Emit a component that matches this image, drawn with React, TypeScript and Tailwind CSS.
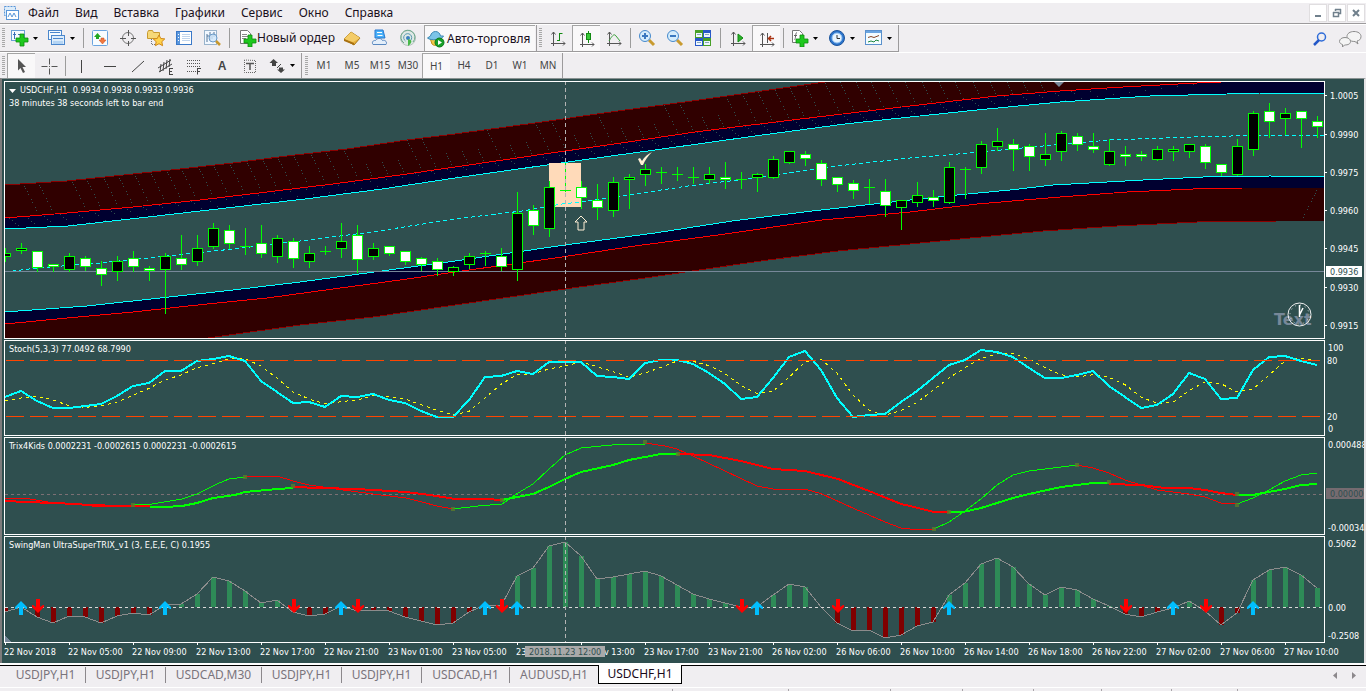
import React from 'react';

type Kind = 'up' | 'down' | 'doji';
type Candle = [Kind, number, number, number, number];

const STEP = 16;
const FIRST_X = 5;
const barX = (i: number) => FIRST_X + i * STEP;

// kind, high, body top, body bottom, low
const candles: Candle[] = [
  ['up', 248, 253, 257, 261], ['up', 243, 248, 251, 253], ['down', 251, 251, 268, 271], ['down', 264, 264, 267, 271],
  ['up', 253, 256, 270, 271], ['down', 256, 258, 267, 270], ['down', 261, 268, 275, 285], ['up', 256, 261, 272, 280],
  ['down', 251, 258, 267, 271], ['down', 266, 268, 271, 280], ['up', 253, 256, 270, 313], ['down', 235, 258, 265, 269],
  ['up', 235, 248, 262, 265], ['up', 223, 228, 247, 248], ['down', 225, 230, 244, 248], ['doji', 228, 246, 246, 254],
  ['down', 225, 243, 254, 257], ['up', 235, 238, 257, 262], ['down', 238, 241, 259, 267], ['up', 246, 253, 262, 267],
  ['doji', 246, 251, 251, 254], ['up', 223, 241, 249, 257], ['down', 225, 235, 260, 272], ['up', 243, 248, 257, 259],
  ['down', 246, 246, 254, 255], ['down', 251, 251, 262, 264], ['down', 257, 258, 265, 270], ['down', 258, 261, 270, 275],
  ['up', 266, 267, 272, 275], ['up', 253, 256, 265, 268], ['doji', 251, 253, 253, 265], ['down', 248, 256, 267, 270],
  ['up', 192, 213, 270, 280], ['down', 205, 210, 226, 234], ['up', 181, 187, 229, 236], ['doji', 163, 190, 190, 191],
  ['down', 181, 187, 198, 208], ['down', 184, 200, 208, 219], ['up', 177, 182, 211, 216], ['up', 174, 177, 180, 208],
  ['up', 164, 169, 175, 185], ['doji', 167, 172, 172, 183], ['doji', 167, 174, 174, 180], ['doji', 167, 177, 177, 183],
  ['up', 167, 174, 180, 183], ['down', 162, 177, 180, 188], ['doji', 172, 179, 179, 188], ['up', 173, 174, 178, 191],
  ['up', 156, 159, 178, 178], ['up', 151, 151, 163, 163], ['down', 151, 154, 159, 165], ['down', 160, 163, 180, 185],
  ['down', 177, 177, 185, 191], ['down', 180, 183, 191, 198], ['doji', 179, 187, 187, 203], ['down', 179, 191, 206, 216],
  ['up', 200, 200, 208, 229], ['up', 182, 195, 203, 206], ['down', 190, 197, 201, 206], ['up', 162, 167, 203, 203],
  ['doji', 167, 169, 169, 198], ['up', 141, 144, 168, 173], ['up', 128, 141, 147, 150], ['down', 139, 144, 150, 170],
  ['down', 144, 146, 157, 170], ['up', 133, 154, 160, 165], ['up', 131, 133, 152, 160], ['down', 133, 136, 145, 150],
  ['down', 133, 146, 150, 152], ['up', 139, 151, 165, 165], ['down', 146, 154, 157, 165], ['down', 151, 154, 157, 160],
  ['up', 146, 149, 160, 160], ['up', 146, 149, 152, 160], ['up', 144, 144, 152, 157], ['down', 144, 146, 163, 168],
  ['down', 164, 164, 173, 175], ['up', 139, 146, 175, 175], ['up', 111, 113, 150, 155], ['down', 103, 111, 122, 137],
  ['up', 108, 113, 119, 134], ['down', 111, 111, 119, 147], ['down', 116, 121, 127, 137],
];

// Channel envelopes, left to right
const upperOuter = '5,185 67,181 133,174 180,169 233,163 287,156 347,149 407,140 455,134 535,123 618,111 685,102 748,93 825,82 900,70 1324,40';
const upperRed = '5,218 67,213 133,207 200,200 267,192 333,184 400,175 455,167 565,151 628,142 695,132 792,120 910,106 997,96 1060,91 1123,87 1197,83 1245,81 1324,79';
const upperCyan = '5,229 68,226 148,217 235,207 305,199 382,189 455,178 582,160 655,150 755,136 845,124 910,117 977,110 1060,102 1150,96 1227,94 1260,93 1293,93 1324,94';
const middle = '5,272 37,268 100,263 167,256 233,249 308,240 372,232 455,219 522,211 562,204 588,201 628,195 688,186 755,178 828,167 910,158 970,153 1053,145 1110,140 1193,137 1270,135 1324,135';
const lowerCyan = '5,312 87,306 160,298 233,290 300,282 367,273 455,261 565,245 655,233 732,221 812,211 910,200 957,195 1010,190 1053,185 1143,180 1203,177 1270,176 1324,177';
const lowerRed = '5,324 67,318 133,312 207,304 267,298 333,289 400,280 455,272 555,258 635,246 718,235 822,220 910,212 977,204 1060,197 1127,192 1193,189 1243,188 1324,188';
const lowerOuter = '5,366 215,337 300,325 373,317 455,305 565,289 645,278 692,271 768,260 838,251 910,244 960,239 1043,231 1117,226 1197,222 1277,221 1324,221';

const band = (a: string, b: string) => `${a} ${b.split(' ').reverse().join(' ')}`;

const outerHatch: [number, number][] = [
  [23, 183], [38, 182], [71, 179], [86, 178], [103, 176], [118, 175], [134, 173], [150, 171], [166, 169], [181, 168],
  [198, 166], [213, 164], [229, 162], [246, 160], [262, 158], [277, 156], [293, 154], [310, 152], [325, 150], [343, 148],
  [366, 164], [382, 162], [398, 160], [407, 140], [422, 139], [446, 153], [462, 151], [478, 149], [487, 130], [510, 145],
  [526, 142], [535, 122], [551, 120], [574, 135], [590, 133], [599, 117], [621, 128], [638, 126], [654, 124], [664, 105],
  [679, 102], [702, 117], [718, 115], [726, 96], [742, 93], [758, 92], [775, 90], [790, 88], [806, 86], [825, 83],
  [840, 82], [856, 82], [871, 82], [888, 82], [905, 82], [922, 82], [939, 82], [955, 82], [973, 82], [990, 82],
  [1007, 82], [1023, 82], [1040, 82],
];

const stoch = [
  397, 391, 401, 408, 408, 406, 404, 396, 386, 383, 371, 371, 361, 359, 356, 361, 381, 392, 403, 402, 407, 396, 397, 394,
  400, 403, 411, 417, 417, 400, 377, 376, 371, 374, 362, 362, 362, 376, 377, 379, 363, 360, 360, 364, 373, 384, 399, 397,
  378, 357, 351, 370, 398, 417, 415, 414, 402, 391, 378, 365, 360, 350, 352, 357, 368, 378, 378, 375, 371, 386, 397, 408,
  405, 394, 373, 379, 399, 398, 370, 357, 356, 361, 365,
];

const signal = stoch.map((v, i) => {
  if (i === 0) return 401;
  if (i === 1) return 398;
  return (v + stoch[i - 1] + stoch[i - 2]) / 3;
});

const thickTrix: [string, string][] = [
  ['#ff0000', '5,501 27,502 77,504 97,506 150,506'],
  ['#00ff00', '150,507 165,507 182,506 197,503 213,498 235,495 245,492 277,489 293,488'],
  ['#ff0000', '293,487 320,488 357,489 390,491 406,492 430,495 455,499 486,499 502,500'],
  ['#00ff00', '502,500 517,497 533,494 549,487 565,479 581,472 613,465 629,460 661,454 678,454'],
  ['#ff0000', '678,454 709,455 741,461 773,469 805,471 838,479 869,491 901,504 910,506 934,512 949,512'],
  ['#00ff00', '949,512 963,512 981,508 1013,498 1029,494 1061,487 1093,483 1109,483'],
  ['#ff0000', '1109,484 1141,485 1165,488 1189,488 1205,490 1221,493 1237,495'],
  ['#00ff00', '1237,495 1253,495 1263,493 1285,489 1301,485 1317,484'],
];

const thinTrix: [string, string][] = [
  ['#ff0000', '5,499 17,498 30,499 48,502 77,504 133,506'],
  ['#00ff00', '133,505 152,504 182,499 197,494 217,484 229,479 245,477'],
  ['#ff0000', '245,476 277,476 293,481 309,485 323,487 343,490 373,494 406,498 422,502 437,506 453,509'],
  ['#00ff00', '453,509 478,506 502,504 518,493 533,484 549,469 565,455 581,448 622,444 645,444'],
  ['#ff0000', '645,443 665,446 677,449 693,456 725,471 757,486 773,489 805,489 822,494 855,509 869,515 885,522 901,528 910,529 934,529'],
  ['#00ff00', '934,529 949,522 965,511 981,499 997,485 1013,475 1029,471 1045,469 1061,467 1077,465'],
  ['#ff0000', '1077,465 1093,468 1109,473 1125,480 1141,485 1157,490 1189,494 1205,497 1221,503 1237,504'],
  ['#00ff00', '1237,504 1253,498 1269,490 1285,481 1301,475 1317,473'],
];

const trixDots: [number, number][] = [
  [133, 505], [245, 477], [293, 486], [453, 509], [502, 500], [645, 442], [678, 454], [934, 529], [949, 512], [1077, 465],
  [1109, 482], [1237, 494], [1237, 505],
];

const swing = [
  612, 607, 617, 623, 616, 617, 623, 616, 613, 615, 605, 604, 594, 577, 581, 591, 603, 600, 612, 616, 614, 606, 611, 610,
  611, 617, 621, 625, 623, 612, 605, 606, 576, 568, 546, 542, 556, 579, 577, 574, 571, 576, 585, 594, 599, 603, 607, 607,
  595, 584, 587, 607, 623, 631, 630, 638, 635, 626, 622, 595, 583, 564, 558, 567, 584, 595, 587, 590, 599, 606, 614, 617,
  612, 608, 601, 611, 625, 613, 580, 570, 567, 575, 588,
];
const buyBars = [1, 10, 21, 30, 32, 47, 59, 73, 78];
const sellBars = [2, 18, 22, 31, 46, 52, 70, 75];

const timeLabels = [
  '22 Nov 2018', '22 Nov 05:00', '22 Nov 09:00', '22 Nov 13:00', '22 Nov 17:00', '22 Nov 21:00', '23 Nov 01:00',
  '23 Nov 05:00', '23 Nov 09:00', '23 Nov 13:00', '23 Nov 17:00', '23 Nov 21:00', '26 Nov 02:00', '26 Nov 06:00',
  '26 Nov 10:00', '26 Nov 14:00', '26 Nov 18:00', '26 Nov 22:00', '27 Nov 02:00', '27 Nov 06:00', '27 Nov 10:00',
];

const line = (values: number[]) => values.map((v, i) => `${barX(i)},${v}`).join(' ');

/* ---------- chart ---------- */

const Crosshair = ({ y, h }: { y: number; h: number }) => (
  <path d={`M565.5 ${y}V${y + h}`} stroke="#b4b4b4" strokeDasharray="4 3" />
);

interface PanelProps {
  top: number;
  height: number;
  className: string;
  title: React.ReactNode;
  axis: React.ReactNode;
  children: React.ReactNode;
}

const Panel = ({ top, height, className, title, axis, children }: PanelProps) => (
  <section className={`flex ${className}`}>
    <div className="relative flex-1 min-w-0 border border-white">
      <svg
        className="block w-full h-full"
        viewBox={`5 ${top + 1} 1319 ${height - 2}`}
        preserveAspectRatio="none"
        fill="none"
        shapeRendering="crispEdges"
      >
        {children}
        <Crosshair y={top} h={height} />
      </svg>
      <div className="absolute left-1 top-[2px] leading-[13px] whitespace-pre">{title}</div>
    </div>
    <svg className="block w-[39px] h-full" viewBox={`1325 ${top} 39 ${height}`} fill="#ffffff">
      {axis}
    </svg>
  </section>
);

const PriceAxis = () => (
  <>
    {([
      [95, '1.0005'], [134, '0.9990'], [172, '0.9975'], [210, '0.9960'], [248, '0.9945'], [287, '0.9930'], [325, '0.9915'],
    ] as [number, string][]).map(([y, label]) => (
      <g key={label}>
        <rect x="1325" y={y} width="2" height="1" />
        <text x="1330" y={y + 4}>{label}</text>
      </g>
    ))}
    <rect x="1326" y="266" width="36" height="11" />
    <text x="1330" y="275" fill="#2f4f4f">0.9936</text>
  </>
);

const CandleShape = ({ candle, x }: { candle: Candle; x: number }) => {
  const [kind, high, top, bottom, low] = candle;
  return (
    <g stroke="#00ff00">
      <path d={`M${x + 0.5} ${high}V${low + 1}`} />
      {kind === 'doji' ? (
        <path d={`M${x - 5} ${top + 0.5}H${x + 6}`} />
      ) : (
        <rect
          x={x - 4.5}
          y={top + 0.5}
          width="10"
          height={Math.max(bottom - top - 1, 2)}
          fill={kind === 'up' ? '#000000' : '#ffffff'}
        />
      )}
    </g>
  );
};

const PriceChart = () => (
  <>
    <defs>
      <clipPath id="outer-band">
        <polygon points={band(upperOuter, upperRed)} />
      </clipPath>
      <clipPath id="inner-band">
        <polygon points={band(upperRed, upperCyan)} />
      </clipPath>
    </defs>
    <polygon points={band(upperOuter, upperRed)} fill="#300000" />
    <polygon points={band(upperRed, upperCyan)} fill="#000030" />
    <polygon points={band(lowerCyan, lowerRed)} fill="#000030" />
    <polygon points={band(lowerRed, lowerOuter)} fill="#300000" />
    <g stroke="#2f4f4f" strokeDasharray="1 2" clipPath="url(#outer-band)">
      {outerHatch.map(([x, y]) => (
        <path key={x} d={`M${x} ${y}l22 44`} />
      ))}
    </g>
    <g stroke="#2f4f4f" strokeDasharray="1 3" clipPath="url(#inner-band)">
      {Array.from({ length: 74 }, (_, i) => (
        <path key={i} d={`M${barX(i) + 4} ${218 - i * 2}l18 14`} />
      ))}
    </g>
    <path d="M1317 190L1302 220" stroke="#2f4f4f" strokeDasharray="1 2" />
    <polyline points={upperOuter} stroke="#8b0000" />
    <polyline points={lowerOuter} stroke="#8b0000" />
    <polyline points={upperRed} stroke="#ff0000" />
    <polyline points={lowerRed} stroke="#ff0000" />
    <polyline points={upperCyan} stroke="#00ffff" />
    <polyline points={lowerCyan} stroke="#00ffff" />
    <rect x="549" y="163" width="32" height="44" fill="#ffdab9" />
    <polyline points={middle} stroke="#00ffff" strokeDasharray="4 3" />
    <path d="M5 271.5H1324" stroke="#778899" />
    {candles.map((candle, i) => (
      <CandleShape key={i} candle={candle} x={barX(i)} />
    ))}
    <g shapeRendering="auto">
      <path d="M638 159l2-1 2 3c2-4 6-7 10-9c-4 4-7 8-9 13h-2z" fill="#ffefd5" />
      <path d="M581 216l6 6h-3v8h-6v-8h-3z" stroke="#ffefd5" />
      <path d="M1054 82h10l-5 5z" fill="#778899" />
      <text x="1274" y="325" fill="#778899" className="font-['DejaVu_Sans',sans-serif] text-[16px] font-bold">Text</text>
      <circle cx="1299.5" cy="314.5" r="11.5" stroke="#f0f0f0" />
      <circle cx="1299.5" cy="314.5" r="9.5" stroke="#d0d8d8" strokeDasharray="1 4" />
      <path d="M1299.5 305V317M1299.5 315l3.5-7" stroke="#ffffff" strokeWidth="1.5" />
    </g>
  </>
);

const StochChart = () => (
  <>
    <polyline points={line(signal)} stroke="#ffff00" strokeDasharray="3 4" />
    <polyline points={line(stoch)} stroke="#00ffff" strokeWidth="2" />
    <path d="M6 360.5H1324M6 416.5H1324" stroke="#ff4500" strokeDasharray="18 6" />
  </>
);

const TrixChart = () => (
  <>
    <path d="M5 494.5H1324" stroke="#7c7074" strokeDasharray="3 3" />
    {thickTrix.map(([color, points]) => (
      <polyline key={points} points={points} stroke={color} strokeWidth="2" />
    ))}
    {thinTrix.map(([color, points]) => (
      <polyline key={points} points={points} stroke={color} />
    ))}
    {trixDots.map(([x, y]) => (
      <rect key={`${x}-${y}`} x={x - 2} y={y - 2} width="4" height="4" fill="#5a7a2a" fillOpacity="0.8" />
    ))}
  </>
);

const SwingChart = () => (
  <>
    {swing.map((y, i) => (
      <rect
        key={i}
        x={barX(i) - 2}
        y={Math.min(y, 607)}
        width="5"
        height={Math.abs(y - 607)}
        fill={y < 607 ? '#2e8b57' : '#800000'}
      />
    ))}
    <polyline points={line(swing)} stroke="#8c8c8c" />
    <path d="M5 607.5H1324" stroke="#d8d8d8" strokeDasharray="3 3" />
    <path d="M5 636l6 6h-6z" fill="#778899" />
    <g shapeRendering="auto">
      {buyBars.map(i => (
        <path key={i} d={`M${barX(i)} 601l6 6v2h-1l-3-2v8h-4v-8l-3 2h-1v-2z`} fill="#00bfff" />
      ))}
      {sellBars.map(i => (
        <path key={i} d={`M${barX(i) + 1} 613l6-6v-2h-1l-3 2v-8h-4v8l-3-2h-1v2z`} fill="#ff0000" />
      ))}
    </g>
  </>
);

const TimeAxis = () => (
  <svg className="block w-full h-5" viewBox="4 643 1360 20" preserveAspectRatio="none" fill="#ffffff">
    {timeLabels.map((label, i) => (
      <g key={label}>
        <rect x={5 + i * 64} y="643" width="1" height="2" />
        <text x={4 + i * 64} y="655">{label}</text>
      </g>
    ))}
    <rect x="525" y="646" width="80" height="11" fill="#a9a9a9" />
    <text x="529" y="655" fill="#2f4f4f">2018.11.23 12:00</text>
  </svg>
);

const ChartWindow = () => (
  <main className="flex flex-col gap-px bg-[#2f4f4f] border-l-2 border-l-[#7d7b7b] border-r-2 border-r-[#e6e4e6] border-t border-t-[#8a9292] pt-[2px] pl-[2px] text-[9px] text-white font-['DejaVu_Sans_Condensed','DejaVu_Sans',sans-serif]">
    <Panel
      top={81}
      height={258}
      className="h-[258px]"
      title={
        <>
          <h1 className="flex items-center gap-1">
            <svg width="7" height="4" viewBox="0 0 7 4" fill="#ffffff"><path d="M0 0h7L3.5 4z" /></svg>
            {'USDCHF,H1  0.9934 0.9938 0.9933 0.9936'}
          </h1>
          <p>38 minutes 38 seconds left to bar end</p>
        </>
      }
      axis={<PriceAxis />}
    >
      <PriceChart />
    </Panel>
    <Panel
      top={340}
      height={96}
      className="h-[96px]"
      title={<h2>Stoch(5,3,3) 77.0492 68.7990</h2>}
      axis={
        <>
          <text x="1328" y="351">100</text>
          <text x="1327" y="364">80</text>
          <text x="1327" y="420">20</text>
          <text x="1328" y="432">0</text>
        </>
      }
    >
      <StochChart />
    </Panel>
    <Panel
      top={437}
      height={98}
      className="h-[98px]"
      title={<h2>Trix4Kids 0.0002231 -0.0002615 0.0002231 -0.0002615</h2>}
      axis={
        <>
          <text x="1328" y="448">0.000488</text>
          <rect x="1326" y="488" width="38" height="11" fill="#756b70" />
          <text x="1330" y="497" fill="#2f4f4f">0.0000000</text>
          <text x="1328" y="531">-0.00034</text>
        </>
      }
    >
      <TrixChart />
    </Panel>
    <Panel
      top={536}
      height={107}
      className="h-[107px]"
      title={<h2>SwingMan UltraSuperTRIX_v1 (3, E,E,E, C) 0.1955</h2>}
      axis={
        <>
          <text x="1328" y="547">0.5062</text>
          <text x="1328" y="611">0.00</text>
          <text x="1328" y="639">-0.2508</text>
        </>
      }
    >
      <SwingChart />
    </Panel>
    <div className="-mt-px">
      <TimeAxis />
    </div>
  </main>
);

/* ---------- toolbars ---------- */

const Svg = ({ children }: { children: React.ReactNode }) => (
  <svg width="18" height="18" viewBox="0 0 18 18" fill="none" className="shrink-0">
    {children}
  </svg>
);

const Plus = ({ x, y }: { x: number; y: number }) => (
  <path d={`M${x + 4} ${y}h4v4h4v4h-4v4h-4v-4h-4v-4h4z`} fill="#1ec81e" stroke="#0c8c0c" strokeWidth="0.8" />
);

const AxisMark = () => <path d="M4.5 3V17M2.5 5.5l2-2.5 2 2.5M2 14.5H16M14 12.5l2 2-2 2" stroke="#555555" />;

const icons = {
  newChart: (
    <Svg>
      <rect x="0.5" y="1.5" width="13" height="10" fill="#f4faff" stroke="#6a9fd6" />
      <path d="M3.5 3v7M2 5.5h3M7 5.5h4" stroke="#3a70b8" />
      <Plus x={5} y={5} />
    </Svg>
  ),
  profiles: (
    <Svg>
      <rect x="0.5" y="1.5" width="13" height="9" fill="#f4faff" stroke="#4a86cc" />
      <rect x="3.5" y="6.5" width="13" height="9" fill="#dcecfb" stroke="#4a86cc" />
      <path d="M2 3.5h10M5 9.5h10" stroke="#4a86cc" />
      <path d="M5 12h10v3H5z" fill="#b4d4f4" />
    </Svg>
  ),
  market: (
    <Svg>
      <rect x="1.5" y="1.5" width="15" height="15" rx="1" fill="#f8fcff" stroke="#6aa4e0" />
      <path d="M6.5 4l3.5 4H8v2H5V8H3z" fill="#22a822" />
      <path d="M11.5 15l-3.5-4h2V9h3v2h2z" fill="#f07840" stroke="#c84a18" strokeWidth="0.5" />
    </Svg>
  ),
  target: (
    <Svg>
      <circle cx="9" cy="9" r="5.5" stroke="#777777" />
      <path d="M9.5 1v6M9.5 12v5M1 9.5h6M12 9.5h5" stroke="#555555" />
    </Svg>
  ),
  favorites: (
    <Svg>
      <path d="M.5 3.5l1-2h4l1 2h6v6h-12z" fill="#f6d878" stroke="#c89a30" />
      <path d="M4.5 10v6M5 15.5h4" stroke="#777777" strokeDasharray="1 1" />
      <path d="M12 6l1.8 3.5 4 .4-3 2.8.8 4-3.6-2-3.6 2 .8-4-3-2.8 4-.4z" fill="#ffd24a" stroke="#d08818" />
    </Svg>
  ),
  navigator: (
    <Svg>
      <rect x="1.5" y="2.5" width="15" height="13" fill="#ffffff" stroke="#3a78c8" />
      <path d="M2 3h3v12H2z" fill="#5a96dc" />
      <path d="M7 5.5h8M7 7.5h8M7 9.5h8M7 11.5h8" stroke="#c0d4ec" />
      <path d="M3.5 5v1M3.5 8v1M3.5 11v1" stroke="#ffffff" />
    </Svg>
  ),
  tester: (
    <Svg>
      <rect x="1.5" y="1.5" width="12" height="14" fill="#f2f8ff" stroke="#9ab4cc" />
      <path d="M4 13V5M4 7h2M7 11V3M9 10V5M11 8V3" stroke="#557799" />
      <circle cx="10" cy="9" r="4" fill="#cfe6fa" fillOpacity="0.8" stroke="#6a9ac8" />
      <path d="M13 12l4 4" stroke="#c8982c" strokeWidth="2.5" />
    </Svg>
  ),
  order: (
    <Svg>
      <path d="M1.5 1.5h7l3 3v10h-10z" fill="#ffffff" stroke="#777777" />
      <path d="M3 5.5h5M3 7.5h6M3 9.5h4" stroke="#888888" />
      <Plus x={5} y={6} />
    </Svg>
  ),
  gold: (
    <Svg>
      <path d="M1 10l7-7 9 6-6 7z" fill="#e8b23c" stroke="#a87818" />
      <path d="M1 10l7-7 9 6-7 4z" fill="#f4cc68" />
      <path d="M1 10v2l10 4v-2z" fill="#a87010" />
    </Svg>
  ),
  signals: (
    <Svg>
      <path d="M4 1h8l2 8H4z" fill="#48b0f8" stroke="#2878d0" />
      <path d="M6 3.5h5M6.5 6.5h5" stroke="#ffffff" />
      <path d="M2 15.5c-1.5-2 0-4.5 2.5-4 1-2.5 6-3 7 0 3-1 5 2 3.5 4z" fill="#e4eefa" stroke="#5a88c0" />
    </Svg>
  ),
  radio: (
    <Svg>
      <circle cx="9" cy="9" r="7.5" fill="#dfe9e6" stroke="#b4c4bc" />
      <path d="M5 14a7 7 0 1 1 9-1" stroke="#6ca88c" />
      <path d="M6.5 12a4 4 0 1 1 5-.5" stroke="#5a98b0" />
      <circle cx="9" cy="9" r="2" fill="#3a80c0" />
      <path d="M9 10c5 1 4 4 0 7z" fill="#48b848" />
    </Svg>
  ),
  robot: (
    <Svg>
      <path d="M3 8l2 6c2 2 5 2 7 0l2-6z" fill="#f4c848" stroke="#c09020" />
      <path d="M3.5 6c1-6 9-6 10 0l3 0c-1 4-13 5-16 2z" fill="#7cc4e8" stroke="#3c88b4" />
      <circle cx="12.5" cy="12.5" r="4.5" fill="#18a028" stroke="#0a7818" />
      <path d="M11 10l4 2.5-4 2.5z" fill="#ffffff" />
    </Svg>
  ),
  bars: (
    <Svg>
      <AxisMark />
      <path d="M10.5 4v8M8 11.5h2.5M10.5 4.5h3" stroke="#128a12" />
    </Svg>
  ),
  candlesIcon: (
    <Svg>
      <AxisMark />
      <path d="M10.5 1v12" stroke="#128a12" />
      <rect x="8.5" y="3.5" width="4" height="6" fill="#38c838" stroke="#128a12" />
    </Svg>
  ),
  lineChart: (
    <Svg>
      <AxisMark />
      <path d="M4 12c3-5 5-8 7-5l4 5" stroke="#38a038" />
    </Svg>
  ),
  zoomIn: (
    <Svg>
      <path d="M11 11l5 5" stroke="#c89a30" strokeWidth="3" />
      <circle cx="7" cy="7" r="5.5" fill="#d4ecfc" stroke="#4488cc" />
      <path d="M4 7h6M7 4v6" stroke="#3a78c0" strokeWidth="2" />
    </Svg>
  ),
  zoomOut: (
    <Svg>
      <path d="M11 11l5 5" stroke="#c89a30" strokeWidth="3" />
      <circle cx="7" cy="7" r="5.5" fill="#d4ecfc" stroke="#4488cc" />
      <path d="M4 7h6" stroke="#3a78c0" strokeWidth="2" />
    </Svg>
  ),
  tile: (
    <Svg>
      <path d="M1 1h8v8H1zM9 9h8v8H9z" fill="#48a028" />
      <path d="M9 1h8v8H9zM1 9h8v8H1z" fill="#2858c8" />
      <path d="M2 4h6v4H2zM10 4h6v4h-6zM2 12h6v4H2zM10 12h6v4h-6z" fill="#eef6ff" />
      <path d="M3 5.5h4M11 5.5h4M3 13.5h4M11 13.5h4" stroke="#88a8b8" />
    </Svg>
  ),
  autoScroll: (
    <Svg>
      <AxisMark />
      <path d="M9 5l5 4-5 4z" fill="#28b028" stroke="#128a12" />
    </Svg>
  ),
  shift: (
    <Svg>
      <AxisMark />
      <path d="M9.5 3v10" stroke="#555555" />
      <path d="M11 8.5h5M13 6l-2.5 2.5L13 11" stroke="#a83010" strokeWidth="1.5" />
    </Svg>
  ),
  indicators: (
    <Svg>
      <path d="M1.5 1.5h7l3 3v9h-10z" fill="#ffffff" stroke="#777777" />
      <path d="M6 3.5c-2 0-1 7-2.5 7M3 6.5h3" stroke="#666666" />
      <Plus x={5} y={6} />
    </Svg>
  ),
  clock: (
    <Svg>
      <circle cx="9" cy="9" r="7.5" fill="#2c74cc" stroke="#1c549c" />
      <circle cx="9" cy="9" r="5" fill="#e8f4ff" stroke="#90c0f0" />
      <path d="M9 6v3.5h3" stroke="#333333" />
    </Svg>
  ),
  template: (
    <Svg>
      <rect x="0.5" y="1.5" width="16" height="14" fill="#f4fcff" stroke="#5a90cc" />
      <path d="M1 2h15v2H1z" fill="#6aa4e0" />
      <path d="M3 8.5l3-1 3 1 5-2" stroke="#884422" />
      <path d="M3 13l3-1 3 1 2-2 3 1" stroke="#228844" />
    </Svg>
  ),
  arrow: (
    <Svg>
      <path d="M5 2l8 8H9.5l2.5 5-2 1-2.5-5L5 13.5z" fill="#555555" />
    </Svg>
  ),
  cross: (
    <Svg>
      <path d="M9.5 1.5v6M9.5 11.5v6M1.5 9.5h6M11.5 9.5h6M9 9.5h1" stroke="#555555" />
    </Svg>
  ),
  vline: <Svg><path d="M8.5 3v13" stroke="#444444" /></Svg>,
  hline: <Svg><path d="M3 9.5h12" stroke="#444444" /></Svg>,
  trend: <Svg><path d="M3 15L15 4" stroke="#444444" /></Svg>,
  channel: (
    <Svg>
      <path d="M1 11L14 3M2 15L15 7M4 7L3 15M7 5L6 14M10 3L9 12M13 2l-1 8" stroke="#444444" />
      <path d="M12.5 11v6.5M12 11.5h4M12 14.5h3M12 17.5h4" stroke="#444444" />
    </Svg>
  ),
  fibo: (
    <Svg>
      <path d="M2 3.5h14M2 6.5h14M2 9.5h14M2 14.5h9" stroke="#555555" strokeDasharray="1 1" />
      <path d="M12.5 11v6.5M12 11.5h4M12 14.5h3" stroke="#444444" />
    </Svg>
  ),
  label: (
    <Svg>
      <path d="M3.5 3v12.5h11V3.5z" stroke="#666666" strokeDasharray="1 1" />
      <path d="M5 6.5h8M9 6v7" stroke="#555555" strokeWidth="1.5" />
    </Svg>
  ),
  shapes: (
    <Svg>
      <path d="M5.5 2L10 6H8v3H4V6H1.5zM13 16l-4-3.5h2v-2h4v2h2z" fill="#444444" />
      <path d="M9 11l4-4" stroke="#444444" />
    </Svg>
  ),
};

const Caret = () => (
  <svg width="5" height="3" viewBox="0 0 5 3" className="ml-1 shrink-0"><path d="M0 0h5L2.5 3z" fill="#000000" /></svg>
);

const Grip = () => <span className="w-[3px] h-5 mx-[2px] my-auto bg-[repeating-linear-gradient(to_bottom,#a8a8a8_0,#a8a8a8_1px,transparent_1px,transparent_2px)]" />;

const Sep = ({ className = 'mx-[3px]' }: { className?: string }) => <span className={`w-px h-5 my-auto bg-[#9c9c9c] ${className}`} />;

interface ToolProps {
  label: string;
  children: React.ReactNode;
  pressed?: boolean;
}

const Tool = ({ label, children, pressed }: ToolProps) => (
  <button
    aria-label={label}
    title={label}
    className={`w-7 h-full flex items-center justify-center ${pressed ? 'bg-[#f9f8f9] border-t border-l border-[#a4a4a4]' : ''}`}
  >
    {children}
  </button>
);

const DropTool = ({ label, children }: ToolProps) => (
  <button aria-label={label} title={label} className="w-[37px] h-full pl-1 flex items-center">
    {children}
    <Caret />
  </button>
);

const menu = ['Файл', 'Вид', 'Вставка', 'Графики', 'Сервис', 'Окно', 'Справка'];
const frames = ['M1', 'M5', 'M15', 'M30', 'H1', 'H4', 'D1', 'W1', 'MN'];

const MenuBar = () => (
  <header className="h-6 flex items-center justify-between bg-[#f0eef1] border-t-3 border-t-white border-b border-b-[#9c9a9c]">
    <nav className="flex items-center text-[12px] leading-4 text-[#1a1020]">
      <span className="w-5 pl-1">
        <svg width="15" height="16" viewBox="0 0 15 16" fill="none">
          <rect x="0.5" y="1.5" width="11" height="9" fill="#dcecfa" stroke="#5a96d8" strokeDasharray="2 1" />
          <rect x="2.5" y="5.5" width="12" height="9" fill="#ffffff" stroke="#5a96d8" />
          <path d="M4 12l2-4 2 4 2-4 2 4" stroke="#5a96d8" />
        </svg>
      </span>
      {menu.map(item => (
        <button key={item} className="px-2">{item}</button>
      ))}
    </nav>
    <div className="flex gap-px pr-px">
      <button aria-label="Свернуть" className="size-[18px] bg-white border border-[#e0dee0] grid place-items-center">
        <svg width="10" height="10" viewBox="0 0 10 10"><path d="M2 7h6v2H2z" fill="#70808c" /></svg>
      </button>
      <button aria-label="Восстановить" className="size-[18px] bg-white border border-[#e0dee0] grid place-items-center">
        <svg width="10" height="10" viewBox="0 0 10 10" fill="none">
          <path d="M3 1.5h6M8.5 1v4.5H7M3.5 1v2M1 4.5h6M1.5 4v4.5h5V4" stroke="#70808c" strokeWidth="1.5" />
        </svg>
      </button>
      <button aria-label="Закрыть" className="size-[18px] bg-white border border-[#e0dee0] grid place-items-center">
        <svg width="10" height="10" viewBox="0 0 10 10"><path d="M2 2l6 6M8 2L2 8" stroke="#70808c" strokeWidth="2" /></svg>
      </button>
    </div>
  </header>
);

const MainToolbar = () => (
  <div className="h-[28px] flex justify-between bg-[#f0eef1] border-t border-t-white">
    <div className="flex items-stretch border-b border-b-[#9c9a9c] border-r border-r-[#9c9a9c] text-[12px] text-[#1a1020]">
      <Grip />
      <DropTool label="Новый график">{icons.newChart}</DropTool>
      <DropTool label="Профили">{icons.profiles}</DropTool>
      <Sep className="mx-[2px]" />
      <Tool label="Обзор рынка">{icons.market}</Tool>
      <Tool label="Окно данных">{icons.target}</Tool>
      <Tool label="Навигатор">{icons.favorites}</Tool>
      <Tool label="Терминал">{icons.navigator}</Tool>
      <Tool label="Тестер стратегий">{icons.tester}</Tool>
      <Sep />
      <button className="w-[105px] pl-[6px] flex items-center whitespace-nowrap">
        {icons.order}
        Новый ордер
      </button>
      <Tool label="MetaEditor">{icons.gold}</Tool>
      <Tool label="Сигналы">{icons.signals}</Tool>
      <Tool label="Маркет">{icons.radio}</Tool>
      <button className="w-[111px] ml-[2px] pl-[2px] flex items-center gap-[2px] whitespace-nowrap bg-[#f9f8f9] border-t border-l border-[#a4a4a4]">
        {icons.robot}
        Авто-торговля
      </button>
      <span className="w-px ml-px bg-[#9c9a9c]" />
      <Grip />
      <Tool label="Бары">{icons.bars}</Tool>
      <Tool label="Свечи" pressed>{icons.candlesIcon}</Tool>
      <Tool label="Линия">{icons.lineChart}</Tool>
      <Sep className="mx-[2px]" />
      <Tool label="Увеличить">{icons.zoomIn}</Tool>
      <Tool label="Уменьшить">{icons.zoomOut}</Tool>
      <Tool label="Упорядочить окна">{icons.tile}</Tool>
      <Sep />
      <Tool label="Автопрокрутка">{icons.autoScroll}</Tool>
      <Tool label="Сдвиг графика" pressed>{icons.shift}</Tool>
      <Sep />
      <DropTool label="Индикаторы">{icons.indicators}</DropTool>
      <DropTool label="Периоды">{icons.clock}</DropTool>
      <DropTool label="Шаблоны">{icons.template}</DropTool>
    </div>
    <div className="flex items-center gap-3 pr-1">
      <button aria-label="Поиск">
        <svg width="14" height="14" viewBox="0 0 14 14" fill="none">
          <circle cx="8.5" cy="5" r="4" stroke="#2e6cd8" strokeWidth="1.5" />
          <path d="M6 8l-5 5" stroke="#2458c8" strokeWidth="2.5" />
        </svg>
      </button>
      <button aria-label="Чат">
        <svg width="23" height="16" viewBox="0 0 23 16" fill="#f4f4f4" stroke="#8c8c8c">
          <path d="M15 .5c4 0 7 2 7 5s-2 4-4 4.5l1 3-3-2.5c-5 0-8-2-8-5s3-5 7-5z" />
          <path d="M6 6.5c3 0 5.5 1.5 5.5 4s-2.5 3.5-6 3.5l-2 2V13.5C2 13 .5 12 .5 10.5c0-2.5 2.5-4 5.5-4z" />
        </svg>
      </button>
    </div>
  </div>
);

const DrawToolbar = () => (
  <div className="h-[26px] flex bg-[#f0eef1] border-t border-t-white">
    <div className="flex items-stretch border-r border-r-[#9c9a9c] text-[#444444]">
      <Grip />
      <Tool label="Курсор" pressed>{icons.arrow}</Tool>
      <Tool label="Перекрестие">{icons.cross}</Tool>
      <Sep className="mx-[2px]" />
      <Tool label="Вертикальная линия">{icons.vline}</Tool>
      <Tool label="Горизонтальная линия">{icons.hline}</Tool>
      <Tool label="Трендовая линия">{icons.trend}</Tool>
      <Tool label="Равноудаленный канал">{icons.channel}</Tool>
      <Tool label="Линии Фибоначчи">{icons.fibo}</Tool>
      <Tool label="Текст"><span className="text-[12px] font-bold font-['Liberation_Sans',sans-serif]">A</span></Tool>
      <Tool label="Текстовая метка">{icons.label}</Tool>
      <DropTool label="Стрелки">{icons.shapes}</DropTool>
    </div>
    <div className="flex items-stretch border-r border-r-[#9c9a9c] pl-px text-[10px] text-[#444444]">
      <Grip />
      {frames.map(frame => (
        <Tool key={frame} label={frame} pressed={frame === 'H1'}>{frame}</Tool>
      ))}
    </div>
  </div>
);

/* ---------- bottom ---------- */

const tabs = [
  { name: 'USDJPY,H1', width: 'w-[80px]' },
  { name: 'USDJPY,H1', width: 'w-[80px]' },
  { name: 'USDCAD,M30', width: 'w-[96px]' },
  { name: 'USDJPY,H1', width: 'w-[80px]' },
  { name: 'USDJPY,H1', width: 'w-[80px]' },
  { name: 'USDCAD,H1', width: 'w-[88px]' },
  { name: 'AUDUSD,H1', width: 'w-[88px]' },
];

const TabBar = () => (
  <nav className="h-[22px] flex text-[12px] leading-4 text-[#7a747c]">
    <div className="h-[19px] flex items-center border-t border-black pl-[6px]">
      {tabs.map((tab, i) => (
        <button
          key={i}
          className={`h-4 text-center ${tab.width} ${i < tabs.length - 1 ? 'border-r border-[#8c888c]' : ''}`}
        >
          {tab.name}
        </button>
      ))}
    </div>
    <button aria-current="page" className="w-[84px] h-[19px] bg-white border-x border-b border-black text-[#1a0a1a]">
      USDCHF,H1
    </button>
    <div className="h-[19px] flex-1 flex items-center justify-end gap-[15px] pr-[10px] border-t border-black">
      <button aria-label="Назад"><svg width="4" height="7" viewBox="0 0 4 7" fill="#8c888c"><path d="M4 0v7L0 3.5z" /></svg></button>
      <button aria-label="Вперёд"><svg width="4" height="7" viewBox="0 0 4 7" fill="#8c888c"><path d="M0 0v7l4-3.5z" /></svg></button>
    </div>
  </nav>
);

const statusCells = ['w-[673px]', 'w-[116px]', 'w-[102px]', 'w-[72px]', 'w-[71px]', 'w-[68px]', 'w-[70px]', 'w-[66px]'];

const StatusBar = () => (
  <footer className="h-1 flex items-end border-t border-t-white">
    {statusCells.map((width, i) => (
      <span key={i} className={`h-[2px] shrink-0 border-r border-[#a8a4a8] ${width}`} />
    ))}
  </footer>
);

const App = () => (
  <div className="bg-[#f0eef1] overflow-hidden font-['Noto_Sans','Open_Sans',sans-serif]">
    <MenuBar />
    <MainToolbar />
    <DrawToolbar />
    <ChartWindow />
    <div className="h-[2px] bg-white" />
    <TabBar />
    <StatusBar />
  </div>
);

export default App;
